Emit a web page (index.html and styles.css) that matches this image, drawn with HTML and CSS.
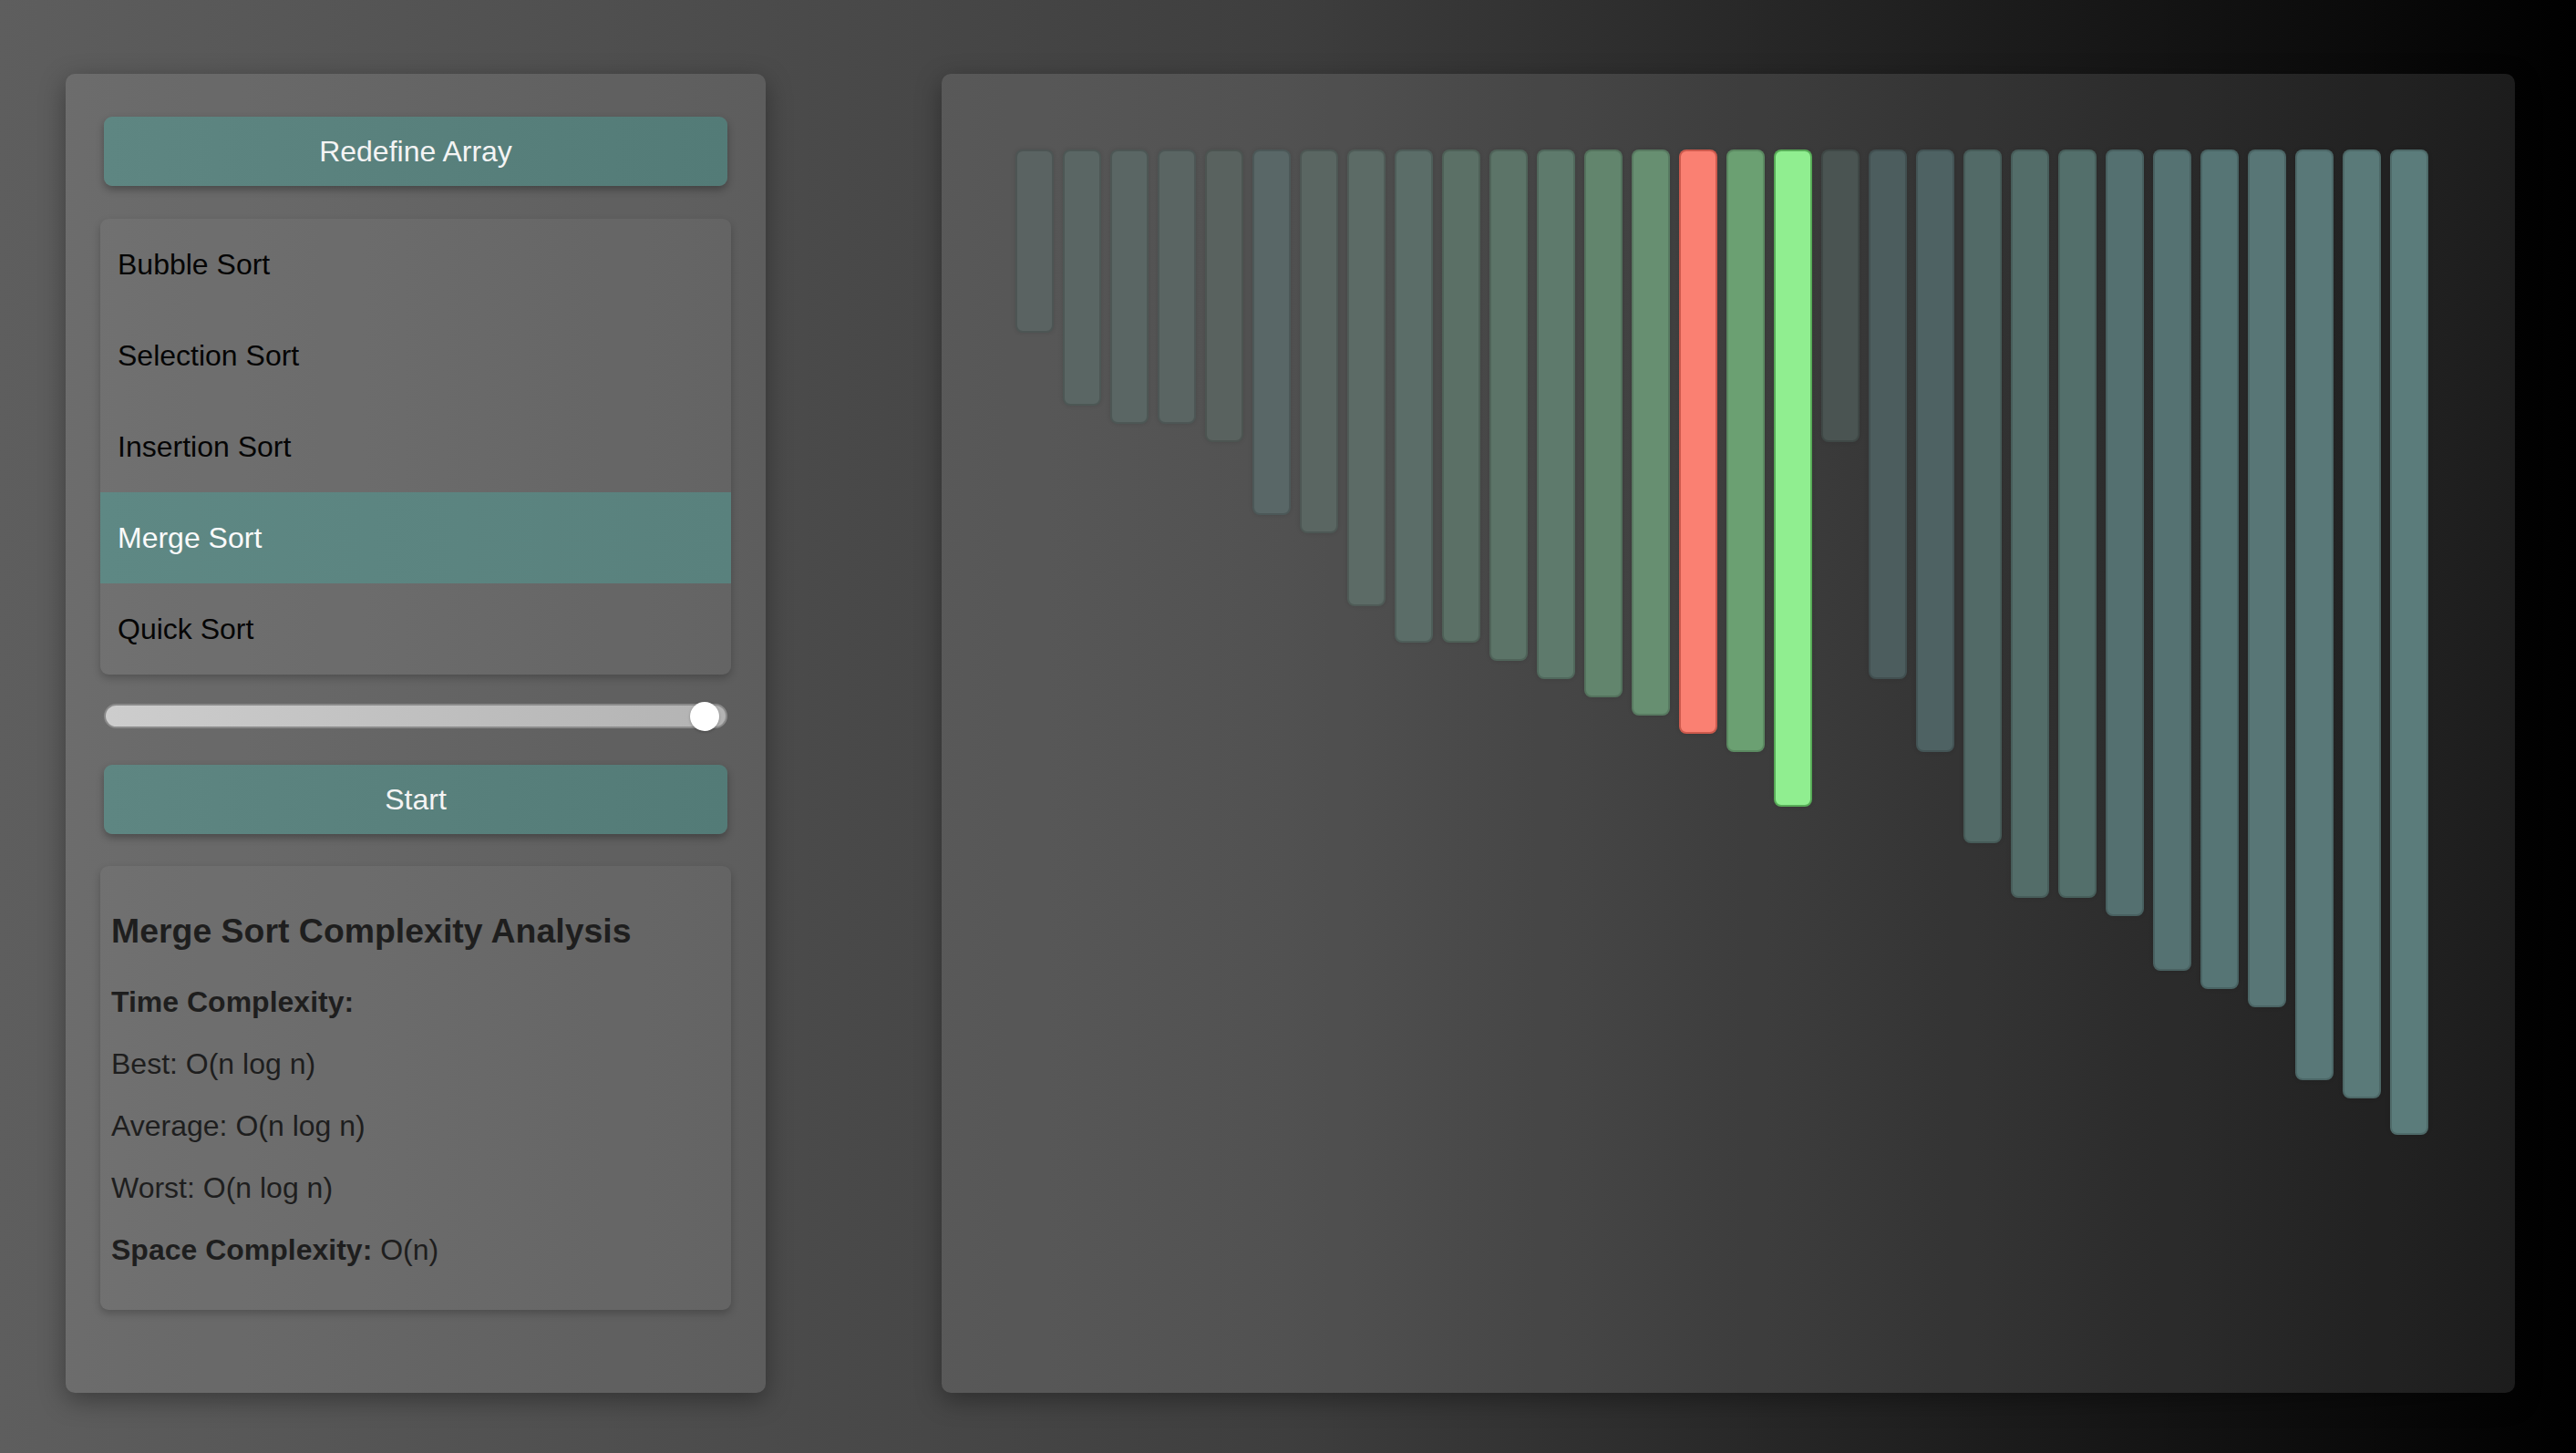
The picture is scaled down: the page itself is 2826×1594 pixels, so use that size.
FILE: index.html
```html
<!DOCTYPE html>
<html lang="en">
<head>
<meta charset="utf-8">
<title>Sorting Visualizer</title>
<link rel="stylesheet" href="styles.css">
</head>
<body>
  <aside class="panel controls">
    <button class="btn">Redefine Array</button>
    <ul class="algo-list">
      <li class="algo">Bubble Sort</li>
      <li class="algo">Selection Sort</li>
      <li class="algo">Insertion Sort</li>
      <li class="algo active">Merge Sort</li>
      <li class="algo">Quick Sort</li>
    </ul>
    <input class="speed" type="range" min="1" max="100" value="99">
    <button class="btn start">Start</button>
    <section class="complexity">
      <h3>Merge Sort Complexity Analysis</h3>
      <p><strong>Time Complexity:</strong></p>
      <p>Best: O(n log n)</p>
      <p>Average: O(n log n)</p>
      <p>Worst: O(n log n)</p>
      <p><strong>Space Complexity:</strong> O(n)</p>
    </section>
  </aside>
  <main class="panel stage">
    <div class="bars">
      <div class="bar" style="--v:10;background:#5a6362"></div>
      <div class="bar" style="--v:14;background:#5a6664"></div>
      <div class="bar" style="--v:15;background:#5a6664"></div>
      <div class="bar" style="--v:15;background:#5a6563"></div>
      <div class="bar" style="--v:16;background:#59625f"></div>
      <div class="bar" style="--v:20;background:#596767"></div>
      <div class="bar" style="--v:21;background:#5a6662"></div>
      <div class="bar" style="--v:25;background:#5c6b66"></div>
      <div class="bar" style="--v:27;background:#5b6d68"></div>
      <div class="bar" style="--v:27;background:#5b7066"></div>
      <div class="bar" style="--v:28;background:#5c7468"></div>
      <div class="bar" style="--v:29;background:#5e7a6c"></div>
      <div class="bar" style="--v:30;background:#62856d"></div>
      <div class="bar" style="--v:31;background:#678f71"></div>
      <div class="bar compare" style="--v:32;background:#fa8072"></div>
      <div class="bar" style="--v:33;background:#6ba072"></div>
      <div class="bar pivot" style="--v:36;background:#90ee90"></div>
      <div class="bar" style="--v:16;background:#4a5452"></div>
      <div class="bar" style="--v:29;background:#4c5d5e"></div>
      <div class="bar" style="--v:33;background:#4e6263"></div>
      <div class="bar" style="--v:38;background:#526a67"></div>
      <div class="bar" style="--v:41;background:#536d69"></div>
      <div class="bar" style="--v:41;background:#536f6b"></div>
      <div class="bar" style="--v:42;background:#547070"></div>
      <div class="bar" style="--v:45;background:#557272"></div>
      <div class="bar" style="--v:46;background:#567575"></div>
      <div class="bar" style="--v:47;background:#587676"></div>
      <div class="bar" style="--v:51;background:#597878"></div>
      <div class="bar" style="--v:52;background:#5a7a79"></div>
      <div class="bar" style="--v:54;background:#5b7c7b"></div>
    </div>
  </main>
</body>
</html>
```
FILE: styles.css
```css
* { box-sizing: border-box; }

html, body { height: 100%; }

body {
  margin: 0;
  height: 100vh;
  display: flex;
  gap: 193px;
  padding: 81px 67px 66px 72px;
  background: linear-gradient(to right, #5e5e5e 0%, #3e3e3e 50%, #000 100%);
  font-family: "Liberation Sans", Arial, Helvetica, sans-serif;
  font-size: 32px;
}

.panel {
  background: rgba(255, 255, 255, 0.1);
  border-radius: 10px;
  box-shadow: 0 8px 28px rgba(0, 0, 0, 0.35);
}

.controls {
  flex: none;
  width: 768px;
  padding: 47px 38px 0;
  display: flex;
  flex-direction: column;
}

.btn {
  display: block;
  height: 76px;
  margin: 0 4px;
  border: none;
  border-radius: 9px;
  background: linear-gradient(to right, #5e8682, #537b77);
  color: #f4f4f4;
  font-family: inherit;
  font-size: 32px;
  box-shadow: 0 4px 8px rgba(0, 0, 0, 0.3);
  padding: 0;
}

.algo-list {
  list-style: none;
  margin: 36px 0 0;
  padding: 0;
  background: rgba(255, 255, 255, 0.04);
  border-radius: 9px;
  overflow: hidden;
  box-shadow: 0 4px 8px rgba(0, 0, 0, 0.22);
}

.algo {
  height: 100px;
  display: flex;
  align-items: center;
  padding-left: 19px;
  color: #050505;
}

.algo.active {
  background: linear-gradient(to right, #5e8884, #59817d);
  color: #fafafa;
}

.speed {
  -webkit-appearance: none;
  appearance: none;
  display: block;
  margin: 32px 4px 0;
  width: calc(100% - 8px);
  height: 27px;
  border: 2px solid #8a8a8a;
  border-radius: 14px;
  background: linear-gradient(to right, #cdcdcd, #b3b3b3);
  outline: none;
  padding: 0;
}

.speed::-webkit-slider-thumb {
  -webkit-appearance: none;
  appearance: none;
  width: 32px;
  height: 32px;
  border-radius: 50%;
  background: #ffffff;
  box-shadow: 0 1px 3px rgba(0, 0, 0, 0.25);
}

.start { margin-top: 40px; }

.complexity {
  margin-top: 35px;
  padding: 13px 12px 16px;
  background: rgba(255, 255, 255, 0.04);
  border-radius: 9px;
  box-shadow: 0 4px 8px rgba(0, 0, 0, 0.22);
  color: #1e1e1e;
}

.complexity h3 {
  font-size: 37.44px;
  margin: 37.44px 0;
}

.complexity p {
  margin: 32px 0;
  line-height: 36px;
}

.stage {
  flex: 1;
  padding: 83px 0 0 81px;
}

.bars {
  width: 1550px;
  display: flex;
  align-items: flex-start;
  gap: 10px;
}

.bar {
  flex: 1;
  height: calc(var(--v) * 20px + 1px);
  border: 2px solid rgba(0, 0, 0, 0.14);
  border-radius: 8px;
  box-shadow: 0 0 5px rgba(0, 0, 0, 0.12);
}

.bar.compare { border-color: rgba(120, 20, 10, 0.35); }
.bar.pivot { border-color: rgba(20, 90, 20, 0.45); }
```
